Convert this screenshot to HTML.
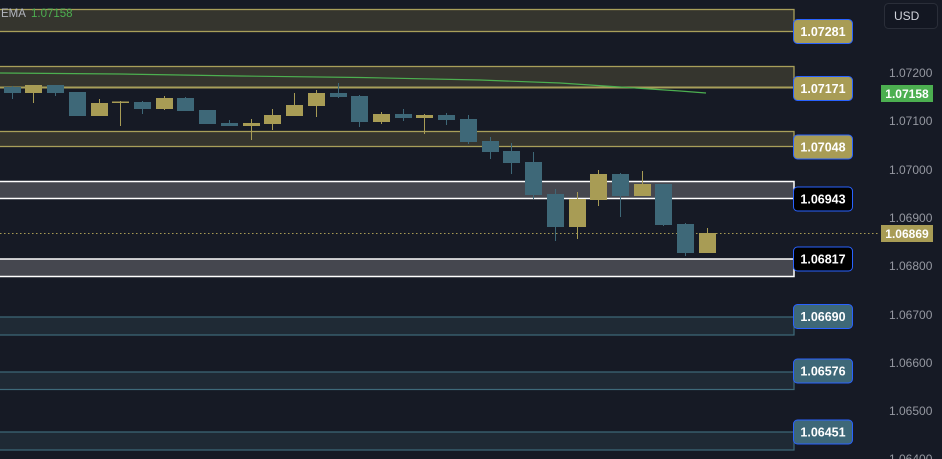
<!DOCTYPE html>
<html><head><meta charset="utf-8"><style>
html,body{margin:0;padding:0;background:#161a25;width:942px;height:459px;overflow:hidden}
svg{display:block}
text{font-family:"Liberation Sans",sans-serif}
</style></head><body>
<svg width="942" height="459" viewBox="0 0 942 459" xmlns="http://www.w3.org/2000/svg">
<rect width="942" height="459" fill="#161a25"/>
<!-- olive zones -->
<g fill="#35352e" stroke="#a89f5a" stroke-width="1.3">
<rect x="-2" y="9.5" width="796" height="22"/>
<rect x="-2" y="66.5" width="796" height="21"/>
<rect x="-2" y="131.5" width="796" height="15"/>
</g>
<line x1="0" y1="87.5" x2="794" y2="87.5" stroke="#a89f5a" stroke-width="2"/>
<!-- grey zones -->
<g fill="#45474f" stroke="#ffffff" stroke-width="1.5">
<rect x="-2" y="181.5" width="796" height="17"/>
<rect x="-2" y="259" width="796" height="17.5"/>
</g>
<!-- blue zones -->
<g fill="#1f2a35" stroke="#3e6a7a" stroke-width="1.2">
<rect x="-2" y="317" width="796" height="18"/>
<rect x="-2" y="372" width="796" height="17.5"/>
<rect x="-2" y="432" width="796" height="18"/>
</g>
<!-- dotted current price -->
<line x1="0" y1="233.5" x2="880" y2="233.5" stroke="#a89c55" stroke-width="1" stroke-dasharray="1.5,2.5"/>
<!-- EMA -->
<polyline points="0,73 120,74 240,76 360,77.5 480,80 560,83 620,87 680,91 706,93" fill="none" stroke="#4caf50" stroke-width="1.2"/>
<!-- candles -->
<g id="c"></g>
<!-- labels -->
<g font-size="12.5" font-weight="bold" fill="#fff" text-anchor="middle">
<rect x="793.5" y="19.5" width="59" height="24" rx="4" fill="#a89c55" stroke="#2962ff"/><text x="823" y="36">1.07281</text>
<rect x="793.5" y="76.5" width="59" height="24" rx="4" fill="#a89c55" stroke="#2962ff"/><text x="823" y="93">1.07171</text>
<rect x="793.5" y="135" width="59" height="24" rx="4" fill="#a89c55" stroke="#2962ff"/><text x="823" y="151.5">1.07048</text>
<rect x="793.5" y="187" width="59" height="24" rx="4" fill="#000" stroke="#2962ff"/><text x="823" y="203.5">1.06943</text>
<rect x="793.5" y="247" width="59" height="24" rx="4" fill="#000" stroke="#2962ff"/><text x="823" y="263.5">1.06817</text>
<rect x="793.5" y="304.5" width="59" height="24" rx="4" fill="#3e6878" stroke="#2962ff"/><text x="823" y="321">1.06690</text>
<rect x="793.5" y="359" width="59" height="24" rx="4" fill="#3e6878" stroke="#2962ff"/><text x="823" y="375.5">1.06576</text>
<rect x="793.5" y="420" width="59" height="24" rx="4" fill="#3e6878" stroke="#2962ff"/><text x="823" y="436.5">1.06451</text>
</g>
<!-- axis -->
<rect x="884.5" y="3.5" width="53" height="25" rx="4" fill="#131722" stroke="#2a2e39"/>
<text x="894" y="20" font-size="12" fill="#d1d4dc">USD</text>
<g font-size="12" fill="#9598a1">
<text x="889" y="77">1.07200</text>
<text x="889" y="125">1.07100</text>
<text x="889" y="174">1.07000</text>
<text x="889" y="222">1.06900</text>
<text x="889" y="270">1.06800</text>
<text x="889" y="319">1.06700</text>
<text x="889" y="367">1.06600</text>
<text x="889" y="415">1.06500</text>
<text x="889" y="463">1.06400</text>
</g>
<rect x="881" y="85" width="52" height="17" fill="#4caf50"/>
<text x="907" y="98" font-size="12" font-weight="bold" fill="#fff" text-anchor="middle">1.07158</text>
<rect x="881" y="225" width="52" height="17" fill="#a89c55"/>
<text x="907" y="238" font-size="12" font-weight="bold" fill="#fff" text-anchor="middle">1.06869</text>
<text x="1" y="17" font-size="11.5" fill="#b2b5be">EMA</text>
<text x="31" y="17" font-size="11.5" fill="#4caf50">1.07158</text>
<g fill="#3e6878">
<rect x="4" y="87" width="17" height="6"/><rect x="12" y="86" width="1" height="13"/>
<rect x="47" y="85" width="17" height="8"/><rect x="55" y="85" width="1" height="11"/>
<rect x="69" y="92" width="17" height="24"/>
<rect x="134" y="102" width="17" height="7"/><rect x="142" y="101" width="1" height="13"/>
<rect x="177" y="98" width="17" height="13"/><rect x="185" y="97" width="1" height="3"/>
<rect x="199" y="110" width="17" height="14"/>
<rect x="221" y="123" width="17" height="3"/><rect x="229" y="120" width="1" height="5"/>
<rect x="330" y="93" width="17" height="4"/><rect x="338" y="83" width="1" height="15"/>
<rect x="351" y="96" width="17" height="26"/><rect x="359" y="95" width="1" height="32"/>
<rect x="395" y="114" width="17" height="4"/><rect x="403" y="109" width="1" height="12"/>
<rect x="438" y="115" width="17" height="5"/><rect x="446" y="113" width="1" height="12"/>
<rect x="460" y="119" width="17" height="23"/><rect x="468" y="115" width="1" height="29"/>
<rect x="482" y="141" width="17" height="11"/><rect x="490" y="137" width="1" height="22"/>
<rect x="503" y="151" width="17" height="12"/><rect x="511" y="143" width="1" height="31"/>
<rect x="525" y="162" width="17" height="33"/><rect x="533" y="152" width="1" height="47"/>
<rect x="547" y="194" width="17" height="33"/><rect x="555" y="189" width="1" height="52"/>
<rect x="612" y="174" width="17" height="22"/><rect x="620" y="173" width="1" height="44"/>
<rect x="655" y="184" width="17" height="41"/><rect x="663" y="184" width="1" height="42"/>
<rect x="677" y="224" width="17" height="29"/><rect x="685" y="223" width="1" height="33"/>
</g>
<g fill="#a89c55">
<rect x="25" y="85" width="17" height="8"/><rect x="33" y="85" width="1" height="18"/>
<rect x="91" y="103" width="17" height="13"/><rect x="99" y="99" width="1" height="5"/>
<rect x="112" y="101.5" width="17" height="1.5"/><rect x="120" y="101" width="1" height="25"/>
<rect x="156" y="98" width="17" height="11"/><rect x="164" y="96" width="1" height="14"/>
<rect x="243" y="123" width="17" height="3"/><rect x="251" y="119" width="1" height="21"/>
<rect x="264" y="115" width="17" height="9"/><rect x="272" y="109" width="1" height="21"/>
<rect x="286" y="105" width="17" height="11"/><rect x="294" y="93" width="1" height="12"/>
<rect x="308" y="93" width="17" height="13"/><rect x="316" y="90" width="1" height="27"/>
<rect x="373" y="114" width="17" height="8"/><rect x="381" y="112" width="1" height="12"/>
<rect x="416" y="115" width="17" height="3"/><rect x="424" y="114" width="1" height="20"/>
<rect x="569" y="199" width="17" height="28"/><rect x="577" y="192" width="1" height="47"/>
<rect x="590" y="174" width="17" height="26"/><rect x="598" y="170" width="1" height="36"/>
<rect x="634" y="184" width="17" height="12"/><rect x="642" y="171" width="1" height="14"/>
<rect x="699" y="233" width="17" height="20"/><rect x="707" y="228" width="1" height="6"/>
</g>
</svg>
</body></html>
